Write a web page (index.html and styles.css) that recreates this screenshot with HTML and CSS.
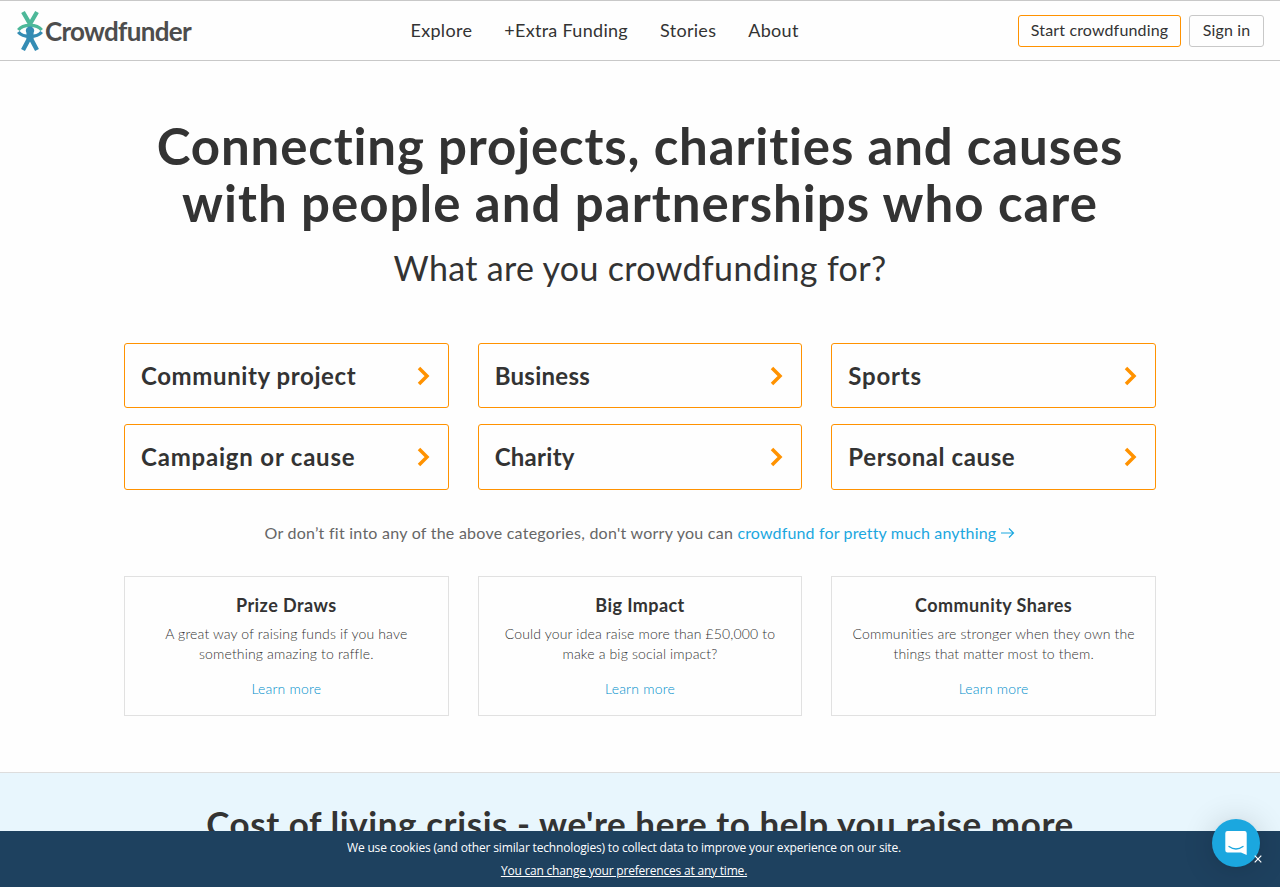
FILE: index.html
```html
<!DOCTYPE html>
<html lang="en">
<head>
<meta charset="utf-8">
<title>Crowdfunder</title>
<link rel="stylesheet" href="styles.css">
</head>
<body>
<header class="header">
  <a class="logo">
    <svg class="logo-mark" width="26" height="42" viewBox="0 0 26 42" fill="none">
      <path d="M1.300 20C6 13.700 20 13.700 24.700 20" stroke="#4db899" stroke-width="3.200"/>
      <path d="M6 2L13 14L20 2" stroke="#4db899" stroke-width="4.200"/>
      <path d="M1.300 22C6 28 20 28 24.700 22" stroke="#348cb4" stroke-width="3.400"/>
      <path d="M6 40L13 27L20 40" stroke="#348cb4" stroke-width="4.400"/>
      <circle cx="13" cy="20.800" r="4.200" fill="#348cb4"/>
      <path d="M9.500 23h7v6h-7z" fill="#348cb4"/>
    </svg>
    <span class="logo-text">Crowdfunder</span>
  </a>
  <nav class="nav">
    <a>Explore</a>
    <a>+Extra Funding</a>
    <a>Stories</a>
    <a>About</a>
  </nav>
  <div class="actions">
    <a class="btn btn-start">Start crowdfunding</a>
    <a class="btn btn-sign">Sign in</a>
  </div>
</header>
<main class="main">
  <h1 class="title">Connecting projects, charities and causes<br><span class="title-second">with people and partnerships who care</span></h1>
  <h2 class="subtitle">What are you crowdfunding for?</h2>
  <div class="grid categories">
    <a class="category"><span>Community project</span><svg class="chevron" width="14" height="20" viewBox="0 0 14 20"><path d="M2 2L10 10L2 18"/></svg></a>
    <a class="category category-tight"><span>Business</span><svg class="chevron" width="14" height="20" viewBox="0 0 14 20"><path d="M2 2L10 10L2 18"/></svg></a>
    <a class="category category-wide"><span>Sports</span><svg class="chevron" width="14" height="20" viewBox="0 0 14 20"><path d="M2 2L10 10L2 18"/></svg></a>
    <a class="category category-wide"><span>Campaign or cause</span><svg class="chevron" width="14" height="20" viewBox="0 0 14 20"><path d="M2 2L10 10L2 18"/></svg></a>
    <a class="category category-tight"><span>Charity</span><svg class="chevron" width="14" height="20" viewBox="0 0 14 20"><path d="M2 2L10 10L2 18"/></svg></a>
    <a class="category"><span>Personal cause</span><svg class="chevron" width="14" height="20" viewBox="0 0 14 20"><path d="M2 2L10 10L2 18"/></svg></a>
  </div>
  <p class="other">Or don’t fit into any of the above categories, don't worry you can <a class="other-link">crowdfund for pretty much anything <svg class="arrow" width="14" height="12" viewBox="0 0 14 12"><path d="M0 6H12.500M8 1.500L12.500 6L8 10.500"/></svg></a></p>
  <div class="grid cards">
    <section class="card">
      <h3 class="card-title">Prize Draws</h3>
      <p class="card-text">A great way of raising funds if you have<br>something amazing to raffle.</p>
      <a class="card-link">Learn more</a>
    </section>
    <section class="card">
      <h3 class="card-title">Big Impact</h3>
      <p class="card-text">Could your idea raise more than £50,000 to<br>make a big social impact?</p>
      <a class="card-link">Learn more</a>
    </section>
    <section class="card">
      <h3 class="card-title">Community Shares</h3>
      <p class="card-text">Communities are stronger when they own the<br>things that matter most to them.</p>
      <a class="card-link">Learn more</a>
    </section>
  </div>
</main>
<section class="crisis">
  <h2 class="crisis-title">Cost of living crisis - we're here to help you raise more</h2>
</section>
<div class="cookies">
  <div class="cookies-copy">
    <p class="cookies-text">We use cookies (and other similar technologies) to collect data to improve your experience on our site.</p>
    <a class="cookies-link">You can change your preferences at any time.</a>
  </div>
</div>
<div class="chat">
  <svg width="48" height="48" viewBox="0 0 48 48">
    <path d="M15.500 12H32.500Q34.700 12 34.700 14.200V36L29 33.500H15.500Q13.300 33.500 13.300 31.300V14.200Q13.300 12 15.500 12Z" fill="#fff"/>
    <path d="M17 27.500Q24 32.500 31 27.500" fill="none" stroke="#1ba7df" stroke-width="1.300" stroke-linecap="round"/>
  </svg>
</div>
<svg class="close" width="8" height="8" viewBox="0 0 8 8"><path d="M.7.700L7.300 7.300M7.300.700L.7 7.300"/></svg>
</body>
</html>
```
FILE: styles.css
```css
* { box-sizing: border-box; }
body {
  margin: 0;
  height: 887px;
  overflow: hidden;
  background: #fefefe;
  color: #333;
  font-family: Lato, "Liberation Sans", sans-serif;
}
h1, h2, h3, p { margin: 0; }
.header {
  display: grid;
  grid-template-columns: 394.500px 1fr auto;
  align-items: center;
  height: 61px;
  padding: 0 16px;
  border-top: 1px solid #c8c8c8;
  border-bottom: 1px solid #c8c8c8;
  white-space: nowrap;
}
.logo { display: flex; align-items: center; gap: 2px; padding-left: 1px; }
.logo-text { font-size: 26px; font-weight: 700; line-height: 30px; color: #4d4d4d; letter-spacing: -0.7px; }
.nav { display: flex; gap: 32px; padding-bottom: 2px; font-size: 18px; line-height: 24px; letter-spacing: .3px; }
.actions { display: flex; gap: 8px; }
.btn { height: 32px; border: 1px solid #c8c8c8; border-radius: 3px; font-size: 16px; line-height: 28px; text-align: center; letter-spacing: .15px; }
.btn-start { width: 163px; border-color: #ff9200; }
.btn-sign { width: 75px; }
.main { width: 1032px; margin: 0 auto; height: 711px; padding-top: 56px; text-align: center; }
.title { font-size: 51px; line-height: 57px; font-weight: 700; white-space: nowrap; letter-spacing: .860px; }
.title-second { letter-spacing: 1px; }
.subtitle { margin-top: 14px; font-size: 34px; line-height: 46px; font-weight: 400; letter-spacing: .33px; }
.grid { display: grid; grid-template-columns: repeat(3, 1fr); column-gap: 29px; }
.categories { margin-top: 52px; row-gap: 16px; grid-auto-rows: 65.300px; }
.category {
  display: flex;
  align-items: center;
  justify-content: space-between;
  padding: 0 17px 0 16px;
  border: 1px solid #ff9200;
  border-radius: 3px;
  font-size: 24px;
  font-weight: 700;
  letter-spacing: .600px;
}
.category-tight { letter-spacing: .270px; }
.category-wide { letter-spacing: .800px; }
.chevron path { fill: none; stroke: #ff9200; stroke-width: 3.500; }
.other { margin-top: 31px; font-size: 16px; line-height: 24px; color: #666; white-space: nowrap; letter-spacing: .250px; }
.other-link { color: #1ba7df; letter-spacing: .150px; }
.arrow { margin-left: 1px; }
.arrow path { fill: none; stroke: #1ba7df; stroke-width: 1.200; }
.cards { margin-top: 31px; }
.card { height: 140px; padding-top: 16px; border: 1px solid #e1e1e1; white-space: nowrap; }
.card-title { font-size: 18px; line-height: 24px; font-weight: 700; letter-spacing: .430px; }
.card-text { margin-top: 7px; font-size: 14px; line-height: 20px; font-weight: 300; color: #333; letter-spacing: .150px; }
.card-link { display: block; margin-top: 15px; font-size: 14px; line-height: 20px; font-weight: 300; color: #008fcb; letter-spacing: .200px; }
.crisis { height: 115px; padding-top: 26px; border-top: 1px solid #ddd; background: #e8f6fd; text-align: center; white-space: nowrap; }
.crisis-title { font-size: 35px; line-height: 48px; font-weight: 700; letter-spacing: .560px; }
.cookies {
  position: fixed;
  left: 0;
  right: 0;
  bottom: 0;
  height: 56px;
  background: #1e415f;
  color: #fff;
  font: 12px/23px "Open Sans", sans-serif;
  letter-spacing: -.165px;
}
.cookies-copy { width: 1248px; padding-top: 5px; text-align: center; }
.cookies-link { text-decoration: underline; letter-spacing: -.2px; }
.chat {
  position: fixed;
  left: 1212px;
  top: 819px;
  width: 48px;
  height: 48px;
  border-radius: 50%;
  background: #1ba7df;
  box-shadow: 0 1px 6px rgba(0,0,0,.06), 0 2px 32px rgba(0,0,0,.16);
}
.close { position: fixed; left: 1254px; top: 855px; }
.close path { stroke: #fff; stroke-width: 1.200; }
```
